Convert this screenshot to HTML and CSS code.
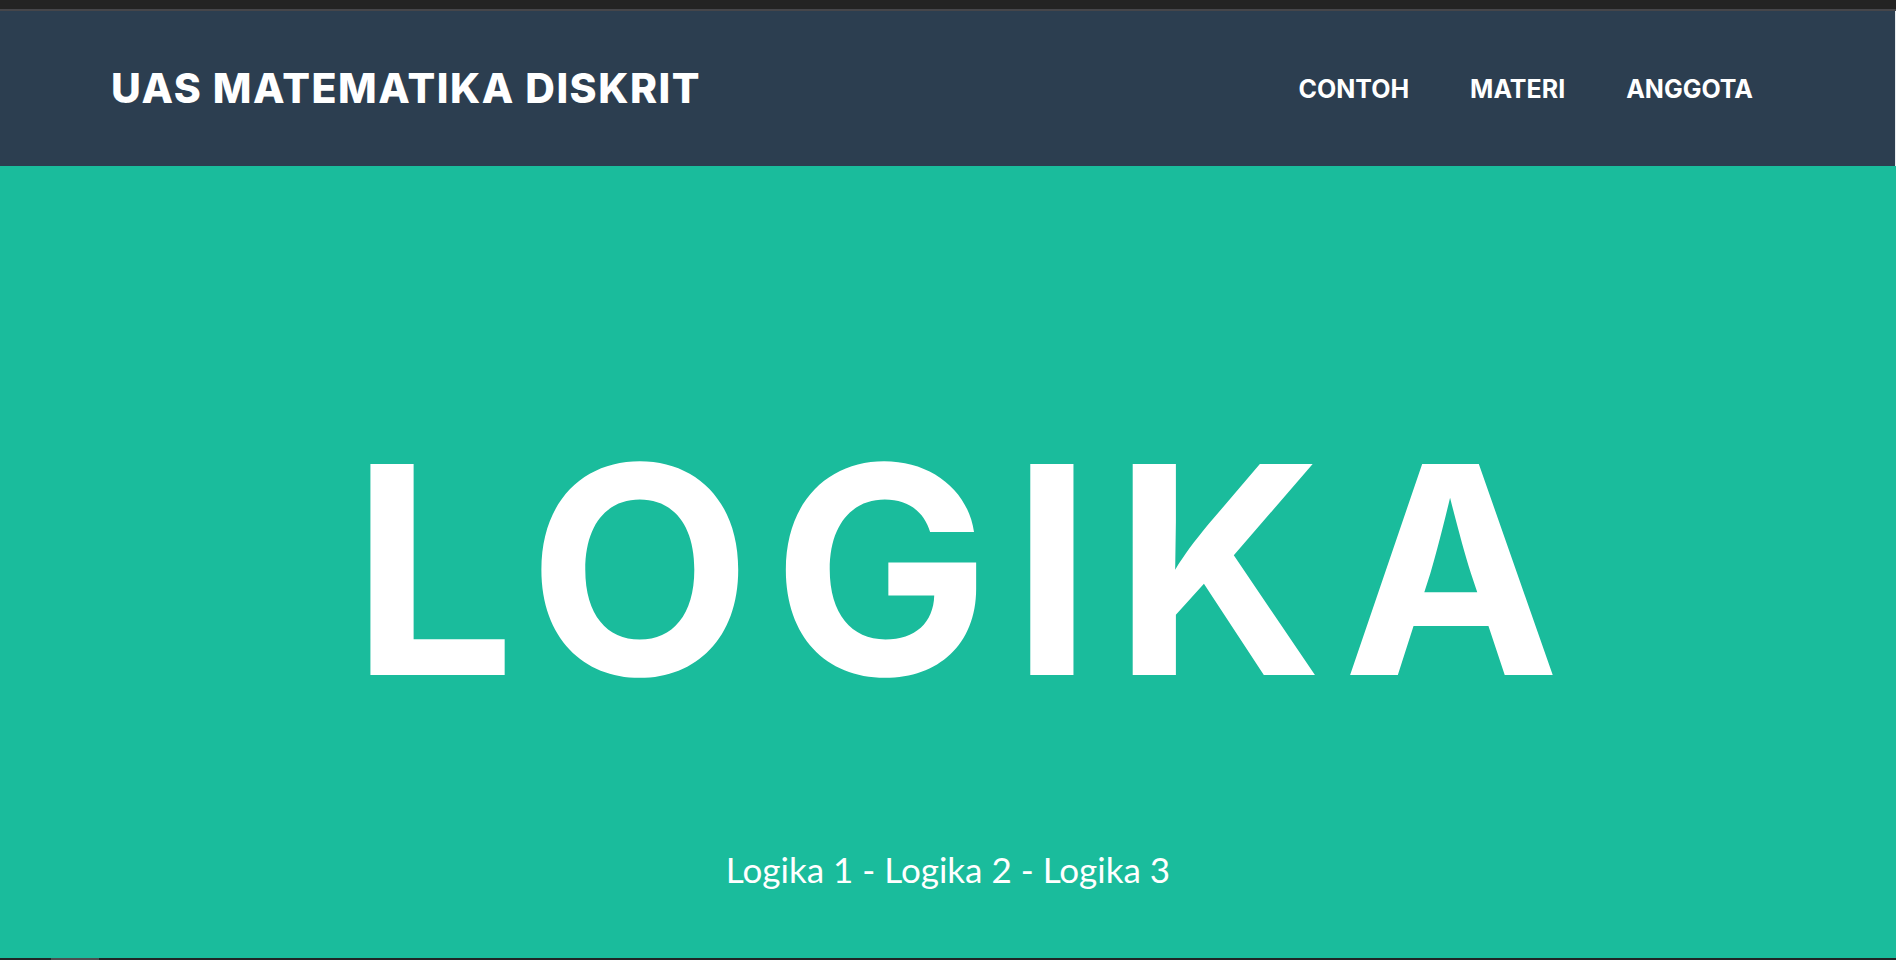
FILE: index.html
```html
<!DOCTYPE html>
<html lang="id">
<head>
<meta charset="utf-8">
<title>UAS Matematika Diskrit</title>
<link rel="stylesheet" href="styles.css">
</head>
<body>
<div class="page">
  <div class="chrome-top"></div>
  <div class="chrome-line"></div>
  <header class="navbar">
    <a class="brand" href="#">UAS MATEMATIKA DISKRIT</a>
    <nav class="nav">
      <a class="nav-link" href="#">CONTOH</a>
      <a class="nav-link" href="#">MATERI</a>
      <a class="nav-link" href="#">ANGGOTA</a>
    </nav>
  </header>
  <main class="masthead">
    <h1 class="masthead-title">LOGIKA</h1>
    <p class="masthead-sub">Logika 1 - Logika 2 - Logika 3</p>
  </main>
  <div class="chrome-bottom"><div class="thumb"></div></div>
</div>
</body>
</html>
```
FILE: styles.css
```css
html, body {
  margin: 0;
  padding: 0;
  width: 1896px;
  height: 960px;
  overflow: hidden;
  background: #222222;
}
.page {
  display: flex;
  flex-direction: column;
  width: 1896px;
  height: 960px;
}
.chrome-top {
  height: 9px;
  background: #232323;
}
.chrome-line {
  height: 2px;
  background: #46464a;
}
.navbar {
  height: 155px;
  background: #2c3e50;
  display: flex;
  align-items: center;
  justify-content: space-between;
  padding: 0 142px 0 111px;
  border-right: 1px solid #e8ecef;
  box-sizing: border-box;
}
.brand {
  font-family: Inter, "Liberation Sans", sans-serif;
  font-weight: 800;
  font-size: 41px;
  letter-spacing: 1.5px;
  color: #ffffff;
  text-decoration: none;
  line-height: 1;
}
.nav {
  display: flex;
  gap: 61px;
  padding-top: 2px;
}
.nav-link {
  font-family: Inter, "Liberation Sans", sans-serif;
  font-weight: 700;
  font-size: 25px;
  color: #ffffff;
  text-decoration: none;
  line-height: 1;
}
.masthead {
  flex: 1;
  background: #1abc9c;
  display: flex;
  flex-direction: column;
  align-items: center;
}
.masthead-title {
  margin: 259px 0 0 36px;
  font-family: Inter, "Liberation Sans", sans-serif;
  font-weight: 700;
  font-size: 290px;
  line-height: 1;
  color: #ffffff;
  letter-spacing: 21px;
}
.masthead-sub {
  margin: auto 0 68px 0;
  font-family: Lato, "Liberation Sans", sans-serif;
  font-size: 35px;
  line-height: 1.2;
  color: #ffffff;
}
.chrome-bottom {
  height: 2px;
  background: #202526;
  position: relative;
}
.thumb {
  position: absolute;
  left: 51px;
  top: 0;
  width: 48px;
  height: 2px;
  background: #4b4f50;
}
```
